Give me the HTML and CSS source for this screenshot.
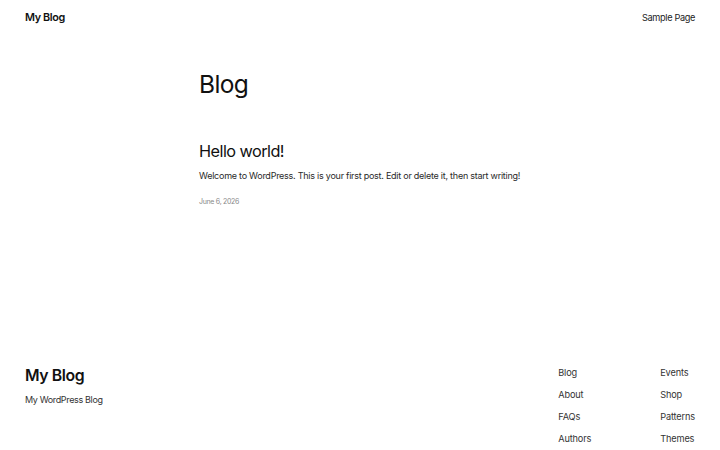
FILE: index.html
```html
<!DOCTYPE html>
<html lang="en">
<head>
<meta charset="utf-8">
<title>My Blog</title>
<link rel="stylesheet" href="styles.css">
</head>
<body>
<header class="site-header">
  <a class="site-title" href="#">My Blog</a>
  <nav class="top-nav"><a href="#">Sample Page</a></nav>
</header>
<main class="content">
  <h1 class="page-title">Blog</h1>
  <article class="post">
    <h2 class="post-title">Hello world!</h2>
    <p class="post-excerpt">Welcome to WordPress. This is your first post. Edit or delete it, then start writing!</p>
    <p class="post-date">June 6, 2026</p>
  </article>
</main>
<footer class="site-footer">
  <div class="footer-brand">
    <div class="footer-title">My Blog</div>
    <div class="footer-tagline">My WordPress Blog</div>
  </div>
  <nav class="footer-nav">
    <a href="#">Blog</a><a href="#">Events</a>
    <a href="#">About</a><a href="#">Shop</a>
    <a href="#">FAQs</a><a href="#">Patterns</a>
    <a href="#">Authors</a><a href="#">Themes</a>
  </nav>
</footer>
</body>
</html>
```

FILE: styles.css
```css
* { box-sizing: border-box; }
html, body { margin: 0; padding: 0; background: #fff; }
body {
  font-family: Inter, "Noto Sans", "Liberation Sans", sans-serif;
  color: #111;
  width: 720px;
  height: 450px;
  overflow: hidden;
}
a { color: inherit; text-decoration: none; }

.site-header {
  height: 34px;
  padding: 0 25px;
  display: flex;
  align-items: center;
  justify-content: space-between;
}
.site-title {
  font-size: 10.8px;
  font-weight: 600;
  letter-spacing: -0.35px;
}
.top-nav {
  font-size: 9.2px;
  color: #222;
  letter-spacing: -0.35px;
}

.content {
  width: 322px;
  margin: 0 auto;
}
.page-title {
  margin: 33px 0 0;
  font-size: 24.5px;
  line-height: 35px;
  font-weight: 400;
  letter-spacing: -0.6px;
}
.post { margin-top: 38px; }
.post-title {
  margin: 0;
  font-size: 16.3px;
  line-height: 23px;
  font-weight: 400;
  letter-spacing: -0.55px;
}
.post-excerpt {
  margin: 5px 0 0;
  font-size: 9px;
  line-height: 15px;
  color: #2a2a2a;
  letter-spacing: -0.25px;
}
.post-date {
  margin: 13px 0 0;
  font-size: 7px;
  line-height: 11px;
  color: #8a8a8a;
  letter-spacing: -0.3px;
}

.site-footer {
  margin-top: 158px;
  padding: 0 25px;
  display: flex;
  justify-content: space-between;
  align-items: flex-start;
}
.footer-title {
  font-size: 15.8px;
  line-height: 22px;
  font-weight: 600;
  letter-spacing: -0.4px;
}
.footer-tagline {
  margin-top: 5px;
  font-size: 9px;
  line-height: 15px;
  color: #333;
  letter-spacing: -0.35px;
}
.footer-nav {
  display: grid;
  grid-template-columns: 102px auto;
  row-gap: 7px;
  margin-top: 0;
  font-size: 9.2px;
  line-height: 15px;
  color: #333;
  letter-spacing: -0.15px;
}
```
